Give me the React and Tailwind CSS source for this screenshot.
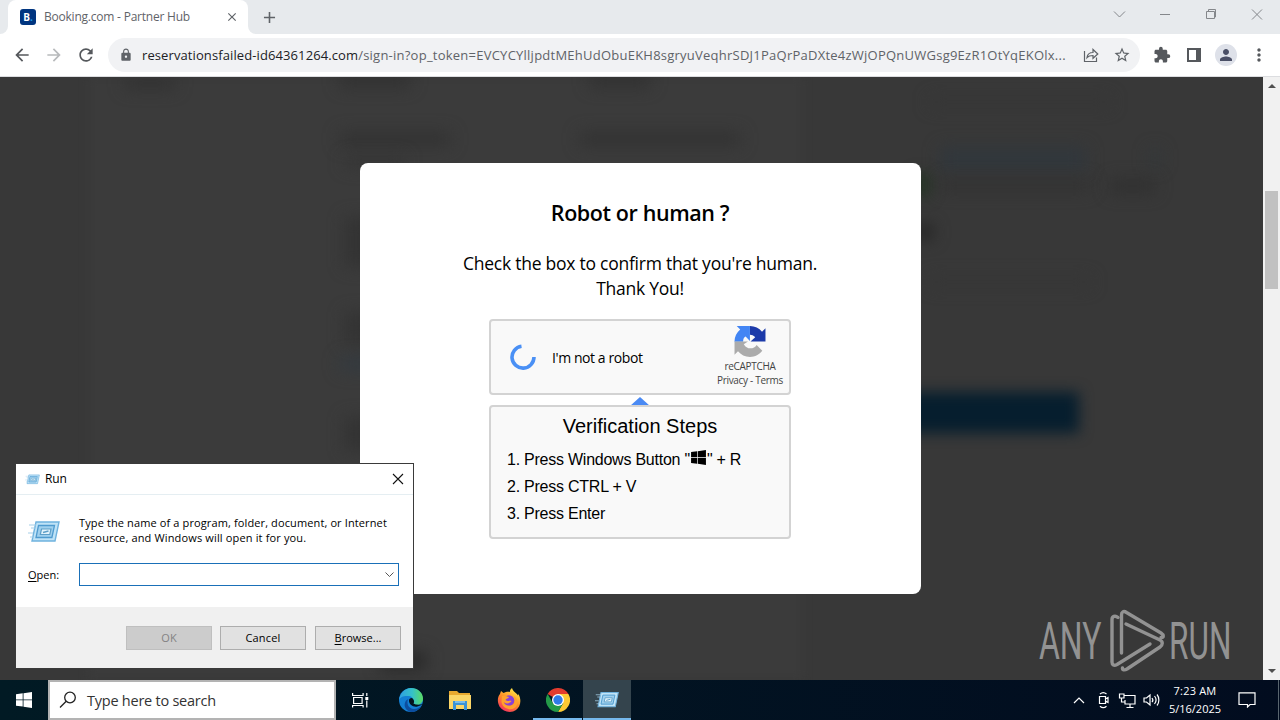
import { FaWindows } from 'react-icons/fa';
import {
  MdArrowBack,
  MdArrowForward,
  MdRefresh,
  MdLock,
  MdStarBorder,
  MdExtension,
  MdPerson,
  MdMoreVert,
  MdClose,
  MdAdd,
} from 'react-icons/md';

const segoe = "font-['Open_Sans','Noto_Sans',sans-serif]";

function TabStrip() {
  return (
    <div className="flex h-[34px] bg-[#e7eaed]">
      <div className="w-2 bg-white">
        <div className="h-full rounded-br-lg bg-[#e7eaed]" />
      </div>
      <div className="flex w-[240px] items-center rounded-t-lg bg-white pl-3 pr-[9px]">
        <div className="flex size-4 items-center justify-center rounded-[3px] bg-[#003580] text-[10px] font-bold text-white">
          B<span className="text-[#1ba1e8]">.</span>
        </div>
        <span className="ml-2 flex-1 whitespace-nowrap text-[12px] tracking-[-0.22px] text-[#5f6368]">
          Booking.com - Partner Hub
        </span>
        <MdClose className="size-3.5 text-[#5f6368]" />
      </div>
      <div className="w-2 bg-white">
        <div className="h-full rounded-bl-lg bg-[#e7eaed]" />
      </div>
      <div className="flex flex-1 items-center pl-1">
        <MdAdd className="size-[19px] text-[#5f6368]" />
      </div>
      <svg className="h-[34px] w-[180px]" viewBox="1100 0 180 34" fill="none" stroke="#84878b" strokeWidth="1">
        <path d="M1114 11.500l5.500 5.500L1125 11.500M1160 14.500h10M1252 9.500l10 10M1262 9.500l-10 10" />
        <path d="M1206.500 11.500h8v7h-8zM1208.500 11.500v-2h7v7.500h-1.500" />
      </svg>
    </div>
  );
}

function Toolbar() {
  return (
    <div className="flex h-[43px] items-center border-b border-[#dcdde0] bg-white">
      <div className="flex w-[108px] items-center gap-3 pl-3 text-[#55585c]">
        <MdArrowBack className="size-5" />
        <MdArrowForward className="size-5 text-[#b8babc]" />
        <MdRefresh className="size-5" />
      </div>
      <div className="flex h-[34px] w-[1032px] items-center rounded-full bg-[#f1f2f4] pl-[11px] pr-[9px]">
        <MdLock className="size-[14px] text-[#5f6368]" />
        <div className="ml-[9px] flex-1 whitespace-nowrap pt-px text-[13px] text-[#5f6368]">
          <span className="tracking-[0.1px] text-[#202124]">reservationsfailed-id64361264.com</span>
          <span className="tracking-[0.24px]">
            /sign-in?op_token=EVCYCYlljpdtMEhUdObuEKH8sgryuVeqhrSDJ1PaQrPaDXte4zWjOPQnUWGsg9EzR1OtYqEKOlx...
          </span>
        </div>
        <svg className="mr-[14px] size-4" viewBox="0 0 16 16" fill="none" stroke="#5f6368" strokeWidth="1.200">
          <path d="M1.500 4v10.500h12v-4" />
          <path d="M4 10.500c.5-3.500 2.500-5 6-5V2.500l4.800 4.500L10 11.300V8.500c-2.500 0-4.500.3-6 2z" />
        </svg>
        <MdStarBorder className="size-[18px] text-[#5f6368]" />
      </div>
      <div className="flex flex-1 items-center pl-[13px] text-[#55585c]">
        <MdExtension className="size-[18px]" />
        <svg className="ml-4 size-[14px]" viewBox="0 0 14 14">
          <path fill="#55585c" fillRule="evenodd" d="M0 0h14v14H0zM2 2v10h7V2z" />
        </svg>
        <div className="ml-[14px] flex size-[22px] items-center justify-center rounded-full bg-[#dee1e9]">
          <MdPerson className="size-[18px] text-[#4a4f66]" />
        </div>
        <MdMoreVert className="ml-3 size-5" />
      </div>
    </div>
  );
}

// Smudges of the partner hub that show through the dark overlay
const smudges = [
  'left-[125px] top-[0px] w-[50px] h-[12px] bg-[#313131]',
  'left-[340px] top-[-4px] w-[70px] h-[14px] bg-[#313131]',
  'left-[590px] top-[-4px] w-[60px] h-[14px] bg-[#313131]',
  'left-[340px] top-[55px] w-[110px] h-[14px] bg-[#323232]',
  'left-[580px] top-[55px] w-[160px] h-[14px] bg-[#323232]',
  'left-[345px] top-[80px] w-[60px] h-[10px] bg-[#343434]',
  'left-[345px] top-[140px] w-[40px] h-[50px] bg-[#333333]',
  'left-[345px] top-[235px] w-[40px] h-[32px] bg-[#333333]',
  'left-[340px] top-[280px] w-[40px] h-[14px] bg-[#333a40]',
  'left-[345px] top-[340px] w-[40px] h-[34px] bg-[#333333]',
  'left-[930px] top-[20px] w-[180px] h-[10px] bg-[#363636]',
  'left-[940px] top-[70px] w-[146px] h-[24px] bg-[#31373c]',
  'left-[1150px] top-[72px] w-[10px] h-[18px] bg-[#33383a]',
  'left-[915px] top-[98px] w-[13px] h-[20px] bg-[#1b331b]',
  'left-[940px] top-[102px] w-[150px] h-[12px] bg-[#323232]',
  'left-[1110px] top-[102px] w-[45px] h-[14px] bg-[#303030]',
  'left-[915px] top-[148px] w-[18px] h-[14px] bg-[#222222]',
  'left-[930px] top-[200px] w-[160px] h-[10px] bg-[#363636]',
  'left-[380px] top-[575px] w-[46px] h-[18px] bg-[#282828]',
];

function Backdrop() {
  return (
    <div className="absolute inset-0 overflow-hidden bg-[#383838]">
      <div className="absolute bottom-0 left-[88px] top-0 w-[715px] bg-[#3b3b3b] blur-[4px]" />
      {smudges.map((s) => (
        <div key={s} className={`absolute blur-[8px] ${s}`} />
      ))}
      <div className="absolute left-[800px] top-[315px] h-[41px] w-[279px] bg-[#061e2e] blur-[7px]" />
    </div>
  );
}

function CaptchaLogo() {
  return (
    <svg className="h-[31px] w-[32px]" viewBox="0 0 64 64">
      <path fill="#1c3aa9" d="M64 31.955l-.033-1.370V4.687l-7.160 7.160C50.948 4.674 42.033.093 32.050.093l-.26.012v17.900l.26.004c3.800 0 7.300 1.600 9.800 4.200l.9.950-9.650 8.860z" />
      <path fill="#4285f4" d="M31.862.094l-1.370.033H4.594l7.160 7.160C4.580 13.147 0 22.060 0 32.046l.012.26h17.600l.3-.8c0-3.800.8-6.500 3.800-9.200l1.200-.8 8.950 9.500z" />
      <path fill="#ababab" d="M.001 32.045l.033 1.370v25.898l7.160-7.160c5.860 7.173 14.774 11.754 24.760 11.754 10.390 0 19.620-4.960 25.457-12.645L45.670 39.015c-2.500 4.400-7.500 7.100-12.600 7.100-5.900 0-11-3.500-13.100-7.600l-.9-.9 8.700-5.570z" />
    </svg>
  );
}

function Modal() {
  return (
    <div className="relative flex h-[431px] w-[561px] flex-col items-center rounded-lg bg-white pr-px text-black">
      <h1 className="mt-[34px] h-8 whitespace-nowrap text-[21.5px] font-semibold leading-8 tracking-[-0.4px]">
        Robot or human ?
      </h1>
      <p className="mt-[22px] whitespace-nowrap text-center text-[17.5px] leading-[25px] tracking-[-0.25px]">
        Check the box to confirm that you're human.
        <br />
        Thank You!
      </p>
      <div className="mt-[18px] flex h-[76px] w-[302px] items-center rounded-[4px] border-2 border-[#d3d3d3] bg-[#f9f9f9]">
        <svg className="ml-[19px] size-[26px]" viewBox="0 0 26 26" fill="none" stroke="#4a90f5" strokeWidth="3.600">
          <path d="M11.500 2.200A11 11 0 1 0 24 13" />
        </svg>
        <span className="ml-4 flex-1 whitespace-nowrap text-[14px] tracking-[-0.42px]">I'm not a robot</span>
        <div className="-mt-px flex w-[78px] flex-col items-center whitespace-nowrap text-[10px] leading-[14px] tracking-[-0.3px] text-[#444]">
          <CaptchaLogo />
          <span className="mt-0.5">reCAPTCHA</span>
          <span>Privacy - Terms</span>
        </div>
      </div>
      <svg className="mt-0.5 h-[9px] w-5" viewBox="0 0 20 9">
        <path fill="#4a8af4" d="M10 0l10 9H0z" />
      </svg>
      <div className="-mt-px h-[134px] w-[302px] rounded-[4px] border-2 border-[#d3d3d3] bg-[#f9f9f9] font-['Liberation_Sans',Arial,sans-serif]">
        <h2 className="mt-[7px] text-center text-[20px] leading-6">Verification Steps</h2>
        <ol className="ml-4 mt-2 whitespace-nowrap text-[16px] leading-[27px] tracking-[-0.24px]">
          <li className="flex">
            1. Press Windows Button "<FaWindows className="mt-[3px] size-[17px]" />" + R
          </li>
          <li>2. Press CTRL + V</li>
          <li>3. Press Enter</li>
        </ol>
      </div>
    </div>
  );
}

function RunIcon({ className }) {
  return (
    <svg className={className} viewBox="0 0 32 24" fill="none">
      <path d="M8 2h23l-4 19H4z" fill="#bfe3f7" stroke="#6fb2de" strokeWidth="1.400" />
      <path d="M10.500 5.500h16l-2.600 12H8z" fill="#9fd0ee" stroke="#4f9bcf" strokeWidth="1.300" />
      <path d="M13.500 9h9.500l-1.200 5.500h-9.500z" fill="#e4f4fc" stroke="#5d9fc8" strokeWidth="1.200" />
      <path d="M15 12.500l5.500-1.500" stroke="#5d9fc8" strokeWidth="1.300" />
      <path d="M1 5h7M3 8h4M0 13h5M2 17h3" stroke="#a5cfe8" strokeWidth="1" />
    </svg>
  );
}

function RunDialog() {
  return (
    <div className="absolute left-[16px] top-[387px] flex h-[204px] w-[397px] flex-col bg-white text-[11px] text-black shadow-[0_0_0_1px_#3a3a3a]">
      <div className="flex h-[31px] items-center border-b border-[#e5eef2] pl-[9px] pr-[9px]">
        <RunIcon className="h-[11px] w-[15px]" />
        <span className="ml-[5px] flex-1 text-[12px] tracking-[-0.1px]">Run</span>
        <svg className="size-3" viewBox="0 0 12 12" stroke="#111" strokeWidth="1.100">
          <path d="M1 1l10 10M11 1L1 11" />
        </svg>
      </div>
      <div className="flex flex-1 flex-col px-3">
        <div className="mt-[19px] flex h-[32px] items-center">
          <RunIcon className="mt-1 h-6 w-8" />
          <p className="ml-[19px] whitespace-nowrap leading-[15px]">
            <span className="tracking-[0.12px]">Type the name of a program, folder, document, or Internet</span>
            <br />
            <span className="tracking-[0.15px]">resource, and Windows will open it for you.</span>
          </p>
        </div>
        <div className="mt-[17px] flex h-[23px] items-center">
          <label className="w-[51px] pt-0.5">
            <span className="underline underline-offset-2">O</span>pen:
          </label>
          <div className="flex h-[23px] w-[320px] items-center justify-end border border-[#1a70b8] pr-1">
            <svg className="h-[6px] w-[9px]" viewBox="0 0 9 6" fill="none" stroke="#555">
              <path d="M.5.5l4 4 4-4" />
            </svg>
          </div>
        </div>
      </div>
      <div className="flex h-[61px] justify-end bg-[#f0f0f0] pr-3 pt-[19px]">
        <div className="flex h-6 w-[86px] items-center justify-center border border-[#bfbfbf] bg-[#cccccc] text-[#838383]">OK</div>
        <div className="ml-2 flex h-6 w-[86px] items-center justify-center border border-[#adadad] bg-[#e1e1e1] tracking-[0.2px]">Cancel</div>
        <div className="ml-[9px] flex h-6 w-[86px] items-center justify-center border border-[#adadad] bg-[#e1e1e1]">
          <span className="underline underline-offset-2">B</span>rowse...
        </div>
      </div>
    </div>
  );
}

function Watermark() {
  return (
    <div className="absolute left-[1038px] top-[532px] flex h-[66px] w-[204px]">
      <svg className="h-[66px] w-[204px] overflow-visible" viewBox="0 0 204 66" fill="none">
        <g fill="#929292" fontFamily="Roboto, sans-serif" fontSize="51">
          <text transform="translate(1 50) scale(.65 1)" textLength="96" lengthAdjust="spacingAndGlyphs">ANY</text>
          <text transform="translate(131 50) scale(.65 1)" textLength="96" lengthAdjust="spacingAndGlyphs">RUN</text>
        </g>
        <g stroke="#929292" strokeWidth="3.400" strokeLinejoin="round" strokeLinecap="round">
          <path d="M80 8.500c-3-2.500-6-1-6 2V53c0 3 2 4 5 2.500L112 35" />
          <path d="M83.500 44V6c0-3 2-4.500 5-2.500L123 24c3 2 3 4.500 0 4.500" />
          <path d="M88 15l34 16c3 1.500 3 5 0 7L89 60c-2.500 1.500-5 1-4.500-1" />
        </g>
      </svg>
    </div>
  );
}

function Scrollbar() {
  return (
    <div className="flex w-[17px] flex-col items-center bg-[#f1f1f1]">
      <svg className="mt-[7px] h-1 w-2" viewBox="0 0 8 4"><path fill="#505050" d="M4 0l4 4H0z" /></svg>
      <div className="mt-[103px] h-[98px] w-[13px] bg-[#c1c1c1]" />
      <svg className="mt-auto mb-[7px] h-1 w-2" viewBox="0 0 8 4"><path fill="#505050" d="M0 0h8L4 4z" /></svg>
    </div>
  );
}

function EdgeIcon() {
  return (
    <svg className="size-6" viewBox="0 0 24 24">
      <defs>
        <linearGradient id="edgeTop" x1="0" x2="1">
          <stop offset="0" stopColor="#2f9fe2" />
          <stop offset=".55" stopColor="#35c1c9" />
          <stop offset="1" stopColor="#5bdc62" />
        </linearGradient>
      </defs>
      <circle cx="12" cy="12" r="12" fill="#137fd4" />
      <path fill="url(#edgeTop)" d="M0 12C1 5 6 0 12 0c7 0 12 5 12 10.500 0 4-3 6.500-6.500 6.500-3 0-4-1-3.500-2.500 1-1.500.7-6-4.500-6.500C5 7.500 1 9 0 12z" />
      <path fill="#0c4ea0" d="M9.500 11C7 14 9 21 15 21c3 0 5-1 7-3-2 4-6 6-10 6-5-1-8-6-5.500-10.500.7-1.300 1.700-2.100 3-2.500z" />
      <path fill="#04141f" d="M10 12c-.5 4 4 7.500 8.500 6.500 2-.4 3.500-1.200 5-2.500-3 1-6.500 1-9-.5 1.500-2 0-5-2-5.500-1.500 0-2.300 1-2.500 2z" />
    </svg>
  );
}

function FolderIcon() {
  return (
    <svg className="h-[19px] w-[22px]" viewBox="0 0 22 19">
      <path fill="#e8a92f" d="M0 0h8l2 2h11v5H0z" />
      <path fill="#fbd667" d="M0 4h22v14H0z" />
      <path fill="#3b93d6" d="M4 10h14v9h-3v-5H7v5H4z" />
      <path fill="#79bdec" d="M6 10h10v2H6z" />
    </svg>
  );
}

function FirefoxIcon() {
  return (
    <svg className="size-6" viewBox="0 0 24 24">
      <defs>
        <linearGradient id="fox" x1=".8" y1="0" x2=".25" y2="1">
          <stop offset="0" stopColor="#fff04a" />
          <stop offset=".5" stopColor="#ff9127" />
          <stop offset="1" stopColor="#f52e60" />
        </linearGradient>
      </defs>
      <path fill="url(#fox)" d="M3 6l1-3 2.500 2C9 3.500 12 3.500 13 4c-.2-2 .8-3 2-4 1 4 4 4 6 7.500.5-1 .3-1.500.2-2C25 12 23.500 19 19 22c-5 3.500-13 2-16.500-3.500C0 14 .5 9 3 6z" />
      <circle cx="12" cy="12.500" r="5.300" fill="#8940d7" />
      <path fill="#ffa22c" d="M5 8c3-1 5 .5 7 1-.5 1.500-3 1.500-3.500 3 2 2 4.500 0 6 1-2 3-6 3-8 1 1 4 7 5 10 2 2-2 2-5 0-8 5 3 5 9 1 12-5 3-12 0-13-6z" />
    </svg>
  );
}

function ChromeIcon() {
  return (
    <svg className="size-6" viewBox="0 0 24 24">
      <path fill="#e33b2e" d="M12 12L1.600 6A12 12 0 0 1 22.400 6z" />
      <path fill="#fcc934" d="M12 12V6h10.400A12 12 0 0 1 12 24l5.200-9z" />
      <path fill="#249a48" d="M12 12l5.200 3L12 24A12 12 0 0 1 1.600 6l5.200 9z" />
      <circle cx="12" cy="12" r="6" fill="#fff" />
      <circle cx="12" cy="12" r="4.700" fill="#2f7be8" />
    </svg>
  );
}

function Taskbar() {
  return (
    <div className="flex h-10 bg-gradient-to-r from-[#011a24] to-[#020c1f] text-white">
      <div className="flex w-12 items-center justify-center">
        <svg className="size-4" viewBox="0 0 16 16" fill="#fff">
          <path d="M0 2.200L6.700 1.300V7.500H0zM7.500 1.200L16 0v7.500H7.500zM0 8.300h6.700v6.300L0 13.700zM7.500 8.300H16V16l-8.500-1.200z" />
        </svg>
      </div>
      <div className="flex w-[288px] items-center border-2 border-[#b3b3b3] bg-white pl-[9px]">
        <svg className="size-[18px]" viewBox="0 0 18 18" fill="none" stroke="#222" strokeWidth="1.300">
          <circle cx="11" cy="6.500" r="5.300" />
          <path d="M7.200 10.200L1 16.500" />
        </svg>
        <span className="ml-[10px] whitespace-nowrap pt-px text-[14.5px] tracking-[-0.24px] text-[#333]">
          Type here to search
        </span>
      </div>
      <div className="flex w-[50px] items-center justify-center pr-0.5">
        <svg className="h-4 w-[17px]" viewBox="0 0 17 16" fill="none" stroke="#fff" strokeWidth="1.200">
          <path d="M.6 1v2.500h10.500V1M1.600 5.500h8.500v6H1.600zM.6 15.500v-2h10.500v2M14.800 1v3M14.800 8.500v7" />
          <path d="M13.300 5h3v3h-3z" fill="#fff" stroke="none" />
        </svg>
      </div>
      <div className="flex w-[49px] items-center justify-center"><EdgeIcon /></div>
      <div className="flex w-[49px] items-center justify-center"><FolderIcon /></div>
      <div className="flex w-[49px] items-center justify-center"><FirefoxIcon /></div>
      <div className="flex w-[49px] items-center justify-center border-b-2 border-[#76b9ed] pt-0.5"><ChromeIcon /></div>
      <div className="ml-px flex w-12 items-center justify-center border-b-2 border-[#76b9ed] bg-[#34444d] pt-px">
        <RunIcon className="h-[18px] w-6" />
      </div>
      <div className="ml-auto flex items-center">
        <svg className="h-5 w-[90px]" viewBox="1072 0 90 20" fill="none" stroke="#fff" strokeWidth="1.200">
          <path d="M1074 13l5-5 5 5" />
          <path d="M1099.500 6.500h6v7h-6zM1105.500 9l2.500-1.500v5l-2.500-1.500M1100 4c2-1.800 4.500-1.800 6.500 0M1100 16.200c2 1.800 4.500 1.800 6.500 0" />
          <path d="M1124 5.500h11v8.500h-10v-4M1130 14v3.500M1126.500 17.500h7M1119.500 4h4.500v4h-4.500zM1121.500 8v4h3" />
          <path d="M1144 8h2.500l3.500-3v10l-3.500-3h-2.500zM1152 8c1 1.300 1 3 0 4M1154.500 6c2 2.500 2 5.500 0 8M1157 4.500c2.500 3 2.500 8 0 11" />
        </svg>
        <div className="w-[66px] whitespace-nowrap text-center text-[11px] leading-[18px]">
          <div className="tracking-[0.2px]">7:23 AM</div>
          <div>5/16/2025</div>
        </div>
        <svg className="ml-[10px] mr-[22px] h-4 w-[18px]" viewBox="0 0 18 16" fill="none" stroke="#fff" strokeWidth="1.200">
          <path d="M1 .8h16v11.700h-5l-2.500 2.500v-2.500H1z" />
        </svg>
        <div className="h-10 w-[2px] border-l border-[#59646e]" />
      </div>
    </div>
  );
}

export default function App() {
  return (
    <div className={`flex h-[720px] w-[1280px] flex-col overflow-hidden ${segoe}`}>
      <TabStrip />
      <Toolbar />
      <div className="relative flex h-[603px]">
        <div className="relative flex flex-1 justify-center pl-[18px] pt-[86px]">
          <Backdrop />
          <Modal />
        </div>
        <Scrollbar />
        <Watermark />
        <RunDialog />
      </div>
      <Taskbar />
    </div>
  );
}
